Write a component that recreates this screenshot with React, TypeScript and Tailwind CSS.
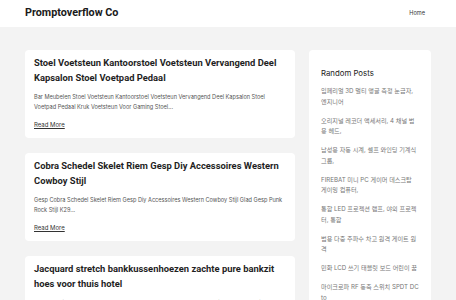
type Post = {
  id: number;
  title: string;
  excerpt: string;
};

const posts: Post[] = [
  {
    id: 1,
    title: "Stoel Voetsteun Kantoorstoel Voetsteun Vervangend Deel Kapsalon Stoel Voetpad Pedaal",
    excerpt:
      "Bar Meubelen Stoel Voetsteun Kantoorstoel Voetsteun Vervangend Deel Kapsalon Stoel Voetpad Pedaal Kruk Voetsteun Voor Gaming Stoel...",
  },
  {
    id: 2,
    title: "Cobra Schedel Skelet Riem Gesp Diy Accessoires Western Cowboy Stijl",
    excerpt:
      "Gesp Cobra Schedel Skelet Riem Gesp Diy Accessoires Western Cowboy Stijl Glad Gesp Punk Rock Stijl K29...",
  },
  {
    id: 3,
    title: "Jacquard stretch bankkussenhoezen zachte pure bankzit hoes voor thuis hotel",
    excerpt:
      "Home Textiel Jacquard stretch bankkussenhoezen zachte pure bankzit hoes voor thuis hotel...",
  },
];

const randomPosts: string[] = [
  "임페리얼 3D 멀티 앵글 측정 눈금자, 엔지니어",
  "오리지널 레코더 액세서리, 4 채널 범용 헤드,",
  "남성용 자동 시계, 셀프 와인딩 기계식 그룹,",
  "FIREBAT 미니 PC 게이머 데스크탑 게이밍 컴퓨터,",
  "통합 LED 프로젝션 램프, 야외 프로젝터, 통합",
  "범용 다중 주파수 차고 원격 게이트 원격",
  "민화 LCD 쓰기 태블릿 보드 어린이 꿈",
  "마이크로파 RF 동축 스위치 SPDT DC to",
];

export default function App() {
  return (
    <div className="min-h-[300px] bg-[#f3f3f3] font-['Inter','Noto_Sans_CJK_KR',sans-serif] text-[#222]">
      {/* Header */}
      <header className="bg-white">
        <div className="mx-auto flex h-[27px] w-[406px] items-center justify-between">
          <h1 className="font-['Roboto',sans-serif] text-[10.8px] font-bold text-[#1a1a1a]">Promptoverflow Co</h1>
          <a className="pr-[6px] text-[5.6px] text-[#333]">Home</a>
        </div>
      </header>

      {/* Content */}
      <div className="mx-auto mt-[23px] flex w-[406px] items-start gap-[14px]">
        <main className="flex w-[270px] flex-col gap-[15px]">
          {posts.map((post) => (
            <article key={post.id} className="rounded-[4px] bg-white px-[9px] pb-[8px] pt-[5px]">
              <h2 className="font-['Roboto',sans-serif] text-[9.4px] font-bold leading-[15px] text-[#1f1f1f]">
                {post.title}
              </h2>
              <p className="mt-[7px] text-[5.6px] leading-[10px] text-[#555]">{post.excerpt}</p>
              <a className="mt-[8px] block w-fit text-[6px] leading-[10px] text-[#333] underline underline-offset-[1px]">
                Read More
              </a>
            </article>
          ))}
        </main>

        <aside className="w-[122px] rounded-[4px] bg-white pb-[10px] pl-[12px] pr-[12px] pt-[17px]">
          <h3 className="text-[7.8px] leading-[12px] text-[#222]">Random Posts</h3>
          <ul className="mt-[7px] flex flex-col gap-[8.5px]">
            {randomPosts.map((item) => (
              <li key={item} className="text-[6.15px] leading-[10.5px] text-[#777]">
                {item}
              </li>
            ))}
          </ul>
        </aside>
      </div>
    </div>
  );
}
